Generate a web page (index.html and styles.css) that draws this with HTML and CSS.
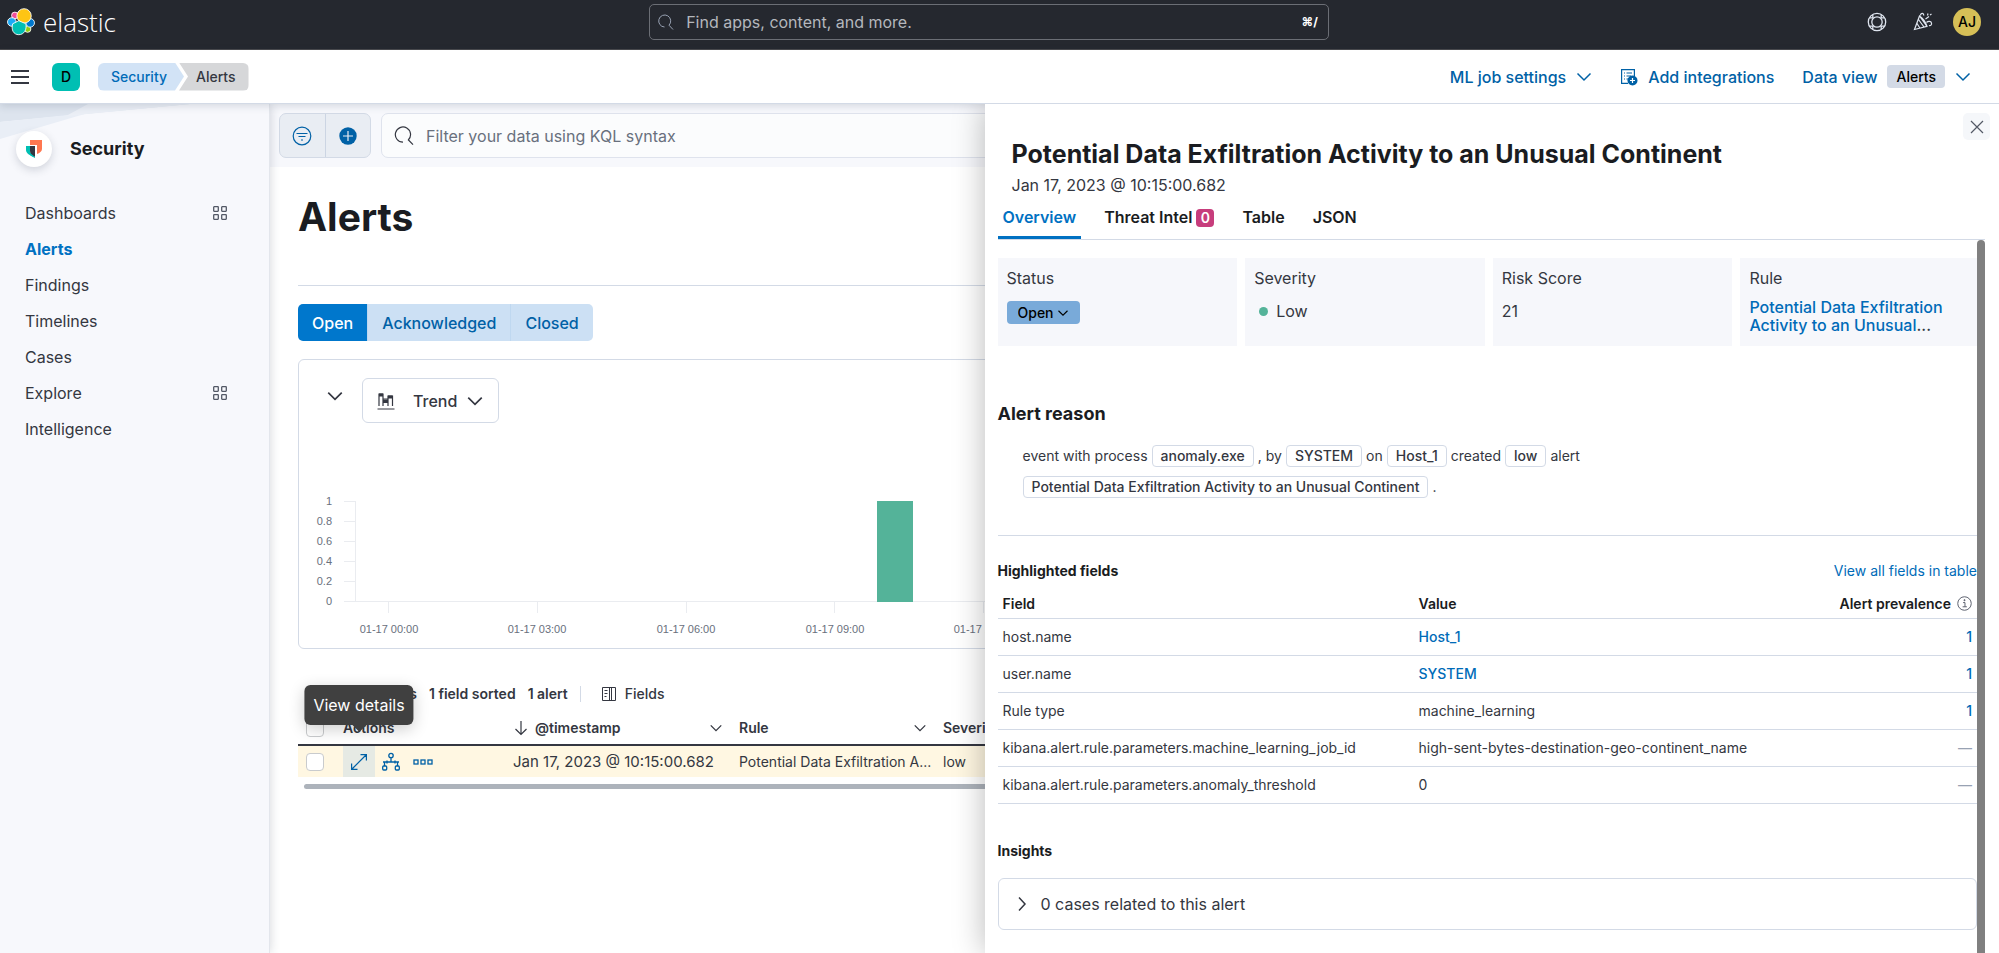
FILE: index.html
```html
<!DOCTYPE html>
<html lang="en">
<head>
  <meta charset="UTF-8">
  <title>Alerts - Elastic Security</title>
  <link rel="stylesheet" href="styles.css">
</head>
<body>
  <header class="topbar">
    <a class="brand" href="#">
      <svg class="brand-logo" width="28" height="28" viewBox="0 0 32 32" stroke="#fff" stroke-width="1">
        <circle cx="9" cy="8.500" r="3.800" fill="#f04e98"/>
        <circle cx="5.500" cy="16" r="4.900" fill="#1ba9f5"/>
        <circle cx="23.500" cy="24" r="3.800" fill="#93c90e"/>
        <circle cx="26.500" cy="17" r="4.900" fill="#0077cc"/>
        <circle cx="19.500" cy="9" r="8.200" fill="#fec514"/>
        <path d="M6.500 18l7-3.500 8 3.500c1.500 6.500-2 12.500-8 12.500S4.500 25 6.500 18z" fill="#00bfb3"/>
      </svg>
      <span class="brand-name">elastic</span>
    </a>
    <label class="global-search">
      <svg width="16" height="16" viewBox="0 0 16 16" fill="none" stroke="#98a2b3"><path d="M6.500 13A6 6 0 1 1 11 11.200L15 15.500"/></svg>
      <input type="text" placeholder="Find apps, content, and more." aria-label="Find apps, content, and more">
      <kbd>⌘/</kbd>
    </label>
    <div class="topbar-actions">
      <button class="icon-button" aria-label="Help">
        <svg width="20" height="20" viewBox="0 0 20 20" fill="none" stroke="#dfe5ef" stroke-width="1.300">
          <circle cx="10" cy="10" r="8.700"/><circle cx="10" cy="10" r="5.200"/>
          <path d="M5.800 2.600v4M2.600 5.800h4M14.200 2.600v4M17.400 5.800h-4M5.800 17.400v-4M2.600 14.200h4M14.200 17.400v-4M17.400 14.200h-4"/>
        </svg>
      </button>
      <button class="icon-button" aria-label="What's new">
        <svg width="20" height="20" viewBox="0 0 20 20" fill="none" stroke="#dfe5ef" stroke-width="1.200">
          <path d="M6.500 4L1.500 17.500l12.500-3.200zM6.500 4c3 2 6 6 7.500 10.300M5.500 7.500l5.500 7.500M4 11.500l3 4.800"/>
          <path d="M7.500 3.500c0-1.500 1-2.500 2.500-2l1 2M12.500 7l3.500-2.500M15 1.500l-.500 2M18.500 2l-1.500 1M13.500 10.500c1.500-1.500 4.500-1.500 5 .500.500 1.800-1 3-2.500 2.500"/>
        </svg>
      </button>
      <button class="avatar" aria-label="Account menu">AJ</button>
    </div>
  </header>

  <div class="subbar">
    <button class="icon-button menu-button" aria-label="Toggle navigation">
      <svg width="20" height="16" viewBox="0 0 20 16" fill="none" stroke="#343741" stroke-width="2"><path d="M1 2h18M1 8h18M1 14h18"/></svg>
    </button>
    <button class="space" aria-label="Default space">D</button>
    <nav class="breadcrumbs" aria-label="Breadcrumbs">
      <a class="crumb crumb-first" href="#">Security</a>
      <span class="crumb crumb-last">Alerts</span>
    </nav>
    <div class="subbar-actions">
      <button class="link-button">ML job settings
        <svg class="chevron" width="16" height="16" viewBox="0 0 16 16"><path d="M1.500 4.500L8 11l6.500-6.500"/></svg>
      </button>
      <a class="link-button" href="#">
        <svg width="18" height="18" viewBox="0 0 18 18" fill="none" stroke="#0061a6" stroke-width="1.200">
          <path d="M8 15.400H1.600V1.600h12.800V8M4 5h1M6.500 5H12M4 8h1M6.500 8H11M4 11h1M6.500 11H9"/>
          <circle cx="12.500" cy="12.500" r="5" fill="#0061a6" stroke="none"/>
          <path d="M12.500 10v5M10 12.500h5" stroke="#fff"/>
        </svg>
        Add integrations</a>
      <button class="link-button">Data view
        <span class="view-badge">Alerts</span>
        <svg class="chevron" width="16" height="16" viewBox="0 0 16 16"><path d="M1.500 4.500L8 11l6.500-6.500"/></svg>
      </button>
    </div>
  </div>

  <div class="app">
    <aside class="sidenav">
      <svg class="sidenav-art" width="190" height="36" viewBox="0 0 190 36">
        <path d="M0 0h190L0 18z" fill="#dde4ee"/>
        <path d="M0 18L88 9 0 35z" fill="#e9eef6"/>
        <path d="M88 0h102L66 12z" fill="#ebeff6"/>
      </svg>
      <div class="solution">
        <span class="solution-logo">
          <svg width="18" height="20" viewBox="0 0 18 20">
            <path d="M5 1h12v9c0 2.500-2.500 4-5 5V6H5z" fill="#ff7750"/>
            <path d="M1 7h4v6l4 5C4 16 1 14 1 11z" fill="#00bfb3"/>
            <path d="M5 7h5v11c-3-1-5-3-5-6z" fill="#343741"/>
            <path d="M5 14l5 4v1c-2-1-4-2-5-3z" fill="#00bfb3"/>
          </svg>
        </span>
        <h2>Security</h2>
      </div>
      <nav class="nav-list" aria-label="Security">
        <a href="#">Dashboards
          <svg width="14" height="14" viewBox="0 0 14 14" fill="none" stroke="#535966" stroke-width="1.300"><rect x=".7" y=".7" width="4.600" height="4.600" rx=".5"/><rect x="8.700" y=".7" width="4.600" height="4.600" rx=".5"/><rect x=".7" y="8.700" width="4.600" height="4.600" rx=".5"/><rect x="8.700" y="8.700" width="4.600" height="4.600" rx=".5"/></svg>
        </a>
        <a class="active" href="#">Alerts</a>
        <a href="#">Findings</a>
        <a href="#">Timelines</a>
        <a href="#">Cases</a>
        <a href="#">Explore
          <svg width="14" height="14" viewBox="0 0 14 14" fill="none" stroke="#535966" stroke-width="1.300"><rect x=".7" y=".7" width="4.600" height="4.600" rx=".5"/><rect x="8.700" y=".7" width="4.600" height="4.600" rx=".5"/><rect x=".7" y="8.700" width="4.600" height="4.600" rx=".5"/><rect x="8.700" y="8.700" width="4.600" height="4.600" rx=".5"/></svg>
        </a>
        <a href="#">Intelligence</a>
      </nav>
    </aside>

    <main class="main">
      <div class="query-bar">
        <div class="filter-buttons">
          <button aria-label="Saved queries">
            <svg width="20" height="20" viewBox="0 0 20 20" fill="none" stroke="#0061a6" stroke-width="1.200"><circle cx="10" cy="10" r="8.800"/><path d="M4.500 7.500h11M6.500 10.500h7M9 14h2"/></svg>
          </button>
          <button aria-label="Add filter">
            <svg width="20" height="20" viewBox="0 0 20 20"><circle cx="10" cy="10" r="8.700" fill="#0061a6"/><path d="M10 5v10M5 10h10" stroke="#e9edf3" stroke-width="1.200"/></svg>
          </button>
        </div>
        <label class="kql">
          <svg width="20" height="20" viewBox="0 0 20 20" fill="none" stroke="#343741" stroke-width="1.200"><path d="M9 16.200A7.600 7.600 0 1 1 14.300 14M14 13.500l5 5.200"/></svg>
          <input type="text" placeholder="Filter your data using KQL syntax" aria-label="Filter your data using KQL syntax">
        </label>
      </div>

      <div class="content">
        <h1>Alerts</h1>
        <div class="status-group">
          <button class="selected">Open</button>
          <button>Acknowledged</button>
          <button>Closed</button>
        </div>

        <section class="chart-panel">
          <div class="chart-head">
            <button class="icon-button collapse" aria-label="Collapse charts">
              <svg class="chevron dark" width="18" height="18" viewBox="0 0 16 16"><path d="M2 5l6 6 6-6"/></svg>
            </button>
            <label class="chart-type">
              <svg width="18" height="18" viewBox="0 0 18 18" fill="none" stroke="#343741" stroke-width="1.200"><path d="M.5 17h17M2 14V2h4v12M6 7h5v7M11 7V4h4.500v10M6 10.500h5"/><path d="M2 3h4M11 5h4.500M6 9h5" stroke-width="3"/></svg>
              <select aria-label="Chart type">
                <option>Trend</option>
                <option>Table</option>
              </select>
              <svg class="chevron dark" width="18" height="18" viewBox="0 0 16 16"><path d="M2 5l6 6 6-6"/></svg>
            </label>
          </div>
          <svg class="chart" height="200" role="img" aria-label="Alerts over time">
            <g stroke="#eaecf0" stroke-width="1" shape-rendering="crispEdges">
              <path d="M56.500 53v101M45 53.500h11M45 73.500h11M45 93.500h11M45 113.500h11M45 133.500h11M45 153.500h1600"/>
              <path d="M89.500 154v11M238.500 154v11M387.500 154v11M535.500 154v11M684.500 154v11"/>
            </g>
            <g class="axis" text-anchor="end">
              <text x="33" y="57">1</text>
              <text x="33" y="77">0.8</text>
              <text x="33" y="97">0.6</text>
              <text x="33" y="117">0.4</text>
              <text x="33" y="137">0.2</text>
              <text x="33" y="157">0</text>
            </g>
            <g class="axis" text-anchor="middle">
              <text x="90" y="185">01-17 00:00</text>
              <text x="238" y="185">01-17 03:00</text>
              <text x="387" y="185">01-17 06:00</text>
              <text x="536" y="185">01-17 09:00</text>
              <text x="684" y="185">01-17 12:00</text>
            </g>
            <rect x="578" y="53" width="36" height="101" fill="#54b399"/>
          </svg>
        </section>

        <div class="grid-toolbar">
          <button class="strong">Columns</button>
          <button class="strong">1 field sorted</button>
          <span class="strong">1 alert</span>
          <button class="fields">
            <svg width="16" height="16" viewBox="0 0 16 16" fill="none" stroke="#343741"><path d="M1.500 1.500h13v13h-13zM8.500 1.500v13M10.500 1.500v13M3.500 4.500h3M3.500 7.500h3M3.500 10.500h2"/></svg>
            Fields
          </button>
        </div>

        <table class="alerts">
          <colgroup><col class="col-check"><col class="col-actions"><col class="col-time"><col class="col-rule"><col></colgroup>
          <thead>
            <tr>
              <th><input type="checkbox" aria-label="Select all"></th>
              <th>Actions</th>
              <th>
                <div class="head-cell">
                  <svg width="16" height="16" viewBox="0 0 16 16" fill="none" stroke="#343741" stroke-width="1.200"><path d="M8 1v13.500M2.500 9L8 14.500 13.500 9"/></svg>
                  @timestamp
                  <svg class="chevron dark push" width="14" height="14" viewBox="0 0 16 16"><path d="M2 5l6 6 6-6"/></svg>
                </div>
              </th>
              <th>
                <div class="head-cell">
                  Rule
                  <svg class="chevron dark push" width="14" height="14" viewBox="0 0 16 16"><path d="M2 5l6 6 6-6"/></svg>
                </div>
              </th>
              <th>Severity</th>
            </tr>
          </thead>
          <tbody>
            <tr>
              <td><input type="checkbox" aria-label="Select alert"></td>
              <td>
                <div class="row-actions">
                  <button class="expand" aria-label="View details">
                    <svg width="18" height="18" viewBox="0 0 18 18" fill="none" stroke="#0061a6" stroke-width="1.200"><path d="M2 16L16 2M10.500 1.600h5.900v5.900M1.600 10.500v5.900h5.900"/></svg>
                    <span class="tooltip" role="tooltip">View details</span>
                  </button>
                  <button aria-label="Analyze event">
                    <svg width="20" height="20" viewBox="0 0 20 20" fill="none" stroke="#0061a6" stroke-width="1.300"><circle cx="10" cy="3.500" r="2.200"/><path d="M10 6v4M2 10h16M3.500 10v4M16.500 10v4M6 8.500v3M14 8.500v3"/><rect x="1.700" y="14" width="4" height="4" rx="1"/><rect x="14.300" y="14" width="4" height="4" rx="1"/></svg>
                  </button>
                  <button aria-label="More actions">
                    <svg width="20" height="8" viewBox="0 0 20 8" fill="none" stroke="#0061a6" stroke-width="1.300"><rect x="1" y="2" width="4" height="4"/><rect x="8" y="2" width="4" height="4"/><rect x="15" y="2" width="4" height="4"/></svg>
                  </button>
                </div>
              </td>
              <td class="time">Jan 17, 2023 @ 10:15:00.682</td>
              <td>Potential Data Exfiltration A...</td>
              <td>low</td>
            </tr>
          </tbody>
        </table>
        <div class="grid-scroll"></div>
      </div>
    </main>

    <section class="flyout" aria-label="Alert details">
      <button class="flyout-close" aria-label="Close">
        <svg width="14" height="14" viewBox="0 0 14 14" fill="none" stroke="#535966" stroke-width="1.200"><path d="M1 1l12 12M13 1L1 13"/></svg>
      </button>
      <header class="flyout-head">
        <h2>Potential Data Exfiltration Activity to an Unusual Continent</h2>
        <p>Jan 17, 2023 @ 10:15:00.682</p>
      </header>
      <div class="tabs" role="tablist">
        <button class="tab active" role="tab" aria-selected="true">Overview</button>
        <button class="tab" role="tab">Threat Intel <span class="count">0</span></button>
        <button class="tab" role="tab">Table</button>
        <button class="tab" role="tab">JSON</button>
      </div>
      <div class="flyout-body">
        <div class="flyout-content">
          <div class="cards">
            <div class="card">
              <h3>Status</h3>
              <label class="status-select">
                <select aria-label="Alert status"><option>Open</option></select>
                <svg class="chevron black" width="12" height="12" viewBox="0 0 16 16"><path d="M2 5l6 6 6-6"/></svg>
              </label>
            </div>
            <div class="card">
              <h3>Severity</h3>
              <p class="severity"><span class="dot"></span>Low</p>
            </div>
            <div class="card">
              <h3>Risk Score</h3>
              <p>21</p>
            </div>
            <div class="card">
              <h3>Rule</h3>
              <p class="rule-name"><a href="#">Potential Data Exfiltration<br>Activity to an Unusual</a>...</p>
            </div>
          </div>

          <h3 class="reason-title">Alert reason</h3>
          <div class="reason">
            <div class="reason-line">
              <span>event with process</span>
              <span class="chip">anomaly.exe</span>
              <span>, by</span>
              <span class="chip">SYSTEM</span>
              <span>on</span>
              <span class="chip">Host_1</span>
              <span>created</span>
              <span class="chip">low</span>
              <span>alert</span>
            </div>
            <div class="reason-line">
              <span class="chip">Potential Data Exfiltration Activity to an Unusual Continent</span>
              <span>.</span>
            </div>
          </div>

          <div class="section-head">
            <h4>Highlighted fields</h4>
            <a href="#">View all fields in table</a>
          </div>
          <table class="fields-table">
            <colgroup><col class="col-field"><col><col class="col-prevalence"></colgroup>
            <thead>
              <tr>
                <th>Field</th>
                <th>Value</th>
                <th>
                  <span class="prevalence">Alert prevalence
                    <svg width="15" height="15" viewBox="0 0 16 16" fill="none" stroke="#535966"><circle cx="8" cy="8" r="7.200"/><path d="M6.500 7h2v4.500M6 11.500h4.500M7.500 4h1v1h-1z"/></svg>
                  </span>
                </th>
              </tr>
            </thead>
            <tbody>
              <tr><td>host.name</td><td><a href="#">Host_1</a></td><td><a href="#">1</a></td></tr>
              <tr><td>user.name</td><td><a href="#">SYSTEM</a></td><td><a href="#">1</a></td></tr>
              <tr><td>Rule type</td><td>machine_learning</td><td><a href="#">1</a></td></tr>
              <tr><td>kibana.alert.rule.parameters.machine_learning_job_id</td><td>high-sent-bytes-destination-geo-continent_name</td><td class="none">—</td></tr>
              <tr><td>kibana.alert.rule.parameters.anomaly_threshold</td><td>0</td><td class="none">—</td></tr>
            </tbody>
          </table>

          <h4 class="insights-title">Insights</h4>
          <button class="insight">
            <svg class="chevron dark" width="16" height="16" viewBox="0 0 16 16"><path d="M5 1.500L11 8l-6 6.500"/></svg>
            0 cases related to this alert
          </button>
        </div>
        <div class="flyout-scroll"></div>
      </div>
    </section>
  </div>
</body>
</html>
```

FILE: styles.css
```css
* {
  box-sizing: border-box;
}

body {
  display: flex;
  flex-direction: column;
  height: 100vh;
  margin: 0;
  font-family: Inter, "Liberation Sans", sans-serif;
  font-size: 16px;
  line-height: 20px;
  color: #343741;
  background: #fff;
  overflow: hidden;
}

h1, h2, h3, h4, p {
  margin: 0;
}

a {
  color: #006bb8;
  text-decoration: none;
}

button, input, select {
  margin: 0;
  padding: 0;
  border: none;
  background: none;
  font: inherit;
  color: inherit;
}

input, select {
  outline: none;
  appearance: none;
}

button {
  cursor: pointer;
}

svg {
  display: block;
  flex: none;
}

.icon-button {
  display: flex;
  align-items: center;
  justify-content: center;
}

.chevron {
  fill: none;
  stroke: #0061a6;
  stroke-width: 1.500;
}

.chevron.dark {
  stroke: #343741;
}

.chevron.black {
  stroke: #000;
}

/* Top bar */
.topbar {
  display: flex;
  justify-content: space-between;
  align-items: flex-start;
  height: 50px;
  padding: 4px 18px 0 7px;
  background: #25282f;
  border-bottom: 1px solid #4a4a4d;
  flex: none;
}

.brand {
  display: flex;
  align-items: center;
  gap: 8px;
  height: 36px;
  flex: 1;
  color: #fff;
}

.brand-name {
  font-family: "Open Sans", sans-serif;
  font-size: 26px;
  font-weight: 300;
}

.global-search {
  display: flex;
  align-items: center;
  gap: 12px;
  width: 34vw;
  height: 36px;
  margin-right: 10px;
  padding: 0 10px 0 8px;
  border: 1px solid #6b6e75;
  border-radius: 5px;
}

.global-search input {
  flex: 1;
  min-width: 0;
}

.global-search input::placeholder {
  color: #b4b7bd;
  opacity: 1;
}

.global-search kbd {
  font-family: inherit;
  font-size: 12px;
  font-weight: 700;
  color: #fff;
}

.topbar-actions {
  display: flex;
  flex: 1;
  align-items: center;
  justify-content: flex-end;
  height: 36px;
  gap: 26px;
}

.avatar {
  width: 28px;
  height: 28px;
  margin-left: -6px;
  border-radius: 50%;
  background: #d6bf57;
  font-size: 14px;
  font-weight: 500;
  color: #000;
}

/* Breadcrumb bar */
.subbar {
  display: flex;
  align-items: center;
  height: 54px;
  padding: 0 28px 0 10px;
  border-bottom: 1px solid #d3dae6;
  box-shadow: 0 2px 8px rgba(40, 50, 70, 0.16);
  background: #fff;
  flex: none;
  position: relative;
  z-index: 2;
}

.menu-button {
  width: 20px;
}

.space {
  width: 28px;
  height: 28px;
  margin: 0 18px 0 22px;
  border-radius: 6px;
  background: #00bfb3;
  font-size: 14px;
  font-weight: 500;
  color: #000;
}

.breadcrumbs {
  display: flex;
  font-size: 14px;
  font-weight: 500;
}

.crumb {
  height: 28px;
  line-height: 28px;
}

.crumb-first {
  padding: 0 17px 0 13px;
  border-radius: 6px 0 0 6px;
  background: #d2e3f6;
  clip-path: polygon(0 0, calc(100% - 9px) 0, 100% 50%, calc(100% - 9px) 100%, 0 100%);
}

.crumb-last {
  margin-left: -5px;
  padding: 0 13px 0 17px;
  border-radius: 0 6px 6px 0;
  background: #d6d7d9;
  clip-path: polygon(0 0, 100% 0, 100% 100%, 0 100%, 9px 50%);
}

.subbar-actions {
  display: flex;
  gap: 28px;
  margin-left: auto;
}

.link-button {
  display: flex;
  align-items: center;
  gap: 10px;
  font-weight: 500;
  color: #0061a6;
}

.view-badge {
  padding: 0 9px;
  border-radius: 4px;
  background: #d3dae6;
  font-size: 14px;
  line-height: 23px;
  color: #000;
}

/* Page layout */
.app {
  display: flex;
  flex: 1;
  min-height: 0;
  position: relative;
}

.sidenav {
  width: 270px;
  flex: none;
  padding: 27px 16px 0;
  background: #f7f8fc;
  border-right: 1px solid #e3e6ec;
  box-shadow: 0 0 10px rgba(40, 50, 70, 0.2);
  position: relative;
  z-index: 1;
}

.sidenav-art {
  position: absolute;
  top: 0;
  left: 0;
}

.solution {
  display: flex;
  align-items: center;
  gap: 18px;
  margin-bottom: 28px;
  position: relative;
}

.solution-logo {
  display: flex;
  align-items: center;
  justify-content: center;
  width: 36px;
  height: 36px;
  border-radius: 50%;
  background: #fff;
  box-shadow: 0 3px 8px rgba(40, 50, 70, 0.18);
}

.solution h2 {
  font-size: 18px;
  font-weight: 700;
  color: #1a1c21;
}

.nav-list a {
  display: flex;
  align-items: center;
  justify-content: space-between;
  height: 36px;
  padding: 0 26px 0 9px;
  color: #343741;
}

.nav-list .active {
  font-weight: 700;
  color: #0071c2;
}

.main {
  flex: 1;
  min-width: 0;
  overflow: hidden;
}

.query-bar {
  display: flex;
  gap: 10px;
  padding: 9px;
  background: #f7f8fc;
}

.filter-buttons {
  display: flex;
  width: 92px;
  height: 45px;
  border: 1px solid #d3dae6;
  border-radius: 7px;
  background: #e9edf3;
}

.filter-buttons button {
  display: flex;
  flex: 1;
  align-items: center;
  justify-content: center;
}

.filter-buttons button + button {
  border-left: 1px solid #ccd5e3;
}

.kql {
  display: flex;
  flex: 1;
  align-items: center;
  gap: 12px;
  padding: 0 12px;
  border: 1px solid #dfe3ed;
  border-radius: 7px;
  background: #fbfcfd;
}

.kql input {
  flex: 1;
}

.kql input::placeholder {
  color: #69707d;
  opacity: 1;
}

.content {
  padding: 30px 28px 0;
}

h1 {
  padding-bottom: 48px;
  border-bottom: 1px solid #d3dae6;
  font-size: 39px;
  font-weight: 700;
  line-height: 40px;
  color: #1a1c21;
}

.status-group {
  display: flex;
  margin: 18px 0;
}

.status-group button {
  height: 37px;
  padding: 0 14px;
  background: #cce0f4;
  font-weight: 500;
  color: #0061a6;
}

.status-group button + button {
  border-left: 1px solid #bfd8f0;
}

.status-group button:first-child {
  border-radius: 5px 0 0 5px;
}

.status-group button:last-child {
  border-radius: 0 5px 5px 0;
}

.status-group .selected {
  background: #0077cc;
  color: #fff;
}

/* Trend chart */
.chart-panel {
  border: 1px solid #d3dae6;
  border-radius: 6px;
}

.chart-head {
  display: flex;
  gap: 17px;
  padding: 18px 26px 0;
}

.collapse {
  width: 20px;
  height: 36px;
}

.chart-type {
  display: flex;
  align-items: center;
  height: 45px;
  padding: 0 14px;
  border: 1px solid #d3dae6;
  border-radius: 6px;
  font-weight: 500;
}

.chart-type select {
  width: 53px;
  margin-left: 18px;
}

.chart {
  width: 100%;
  margin-top: 25px;
}

.axis {
  font-family: "Liberation Sans", Arial, sans-serif;
  font-size: 11px;
  fill: #69707d;
}

/* Alerts grid */
.grid-toolbar {
  display: flex;
  align-items: center;
  gap: 12px;
  height: 28px;
  margin: 31px 0 4px;
  padding-left: 59px;
  font-size: 14px;
}

.strong {
  font-weight: 600;
}

.fields {
  display: flex;
  align-items: center;
  gap: 8px;
  height: 16px;
  padding-left: 20px;
  border-left: 1px solid #d3dae6;
  font-weight: 500;
}

.alerts {
  width: 100%;
  table-layout: fixed;
  border-collapse: separate;
  border-spacing: 0;
}

.col-check {
  width: 37px;
}

.col-actions {
  width: 170px;
}

.col-time {
  width: 226px;
}

.col-rule {
  width: 204px;
}

.alerts th,
.alerts td {
  padding: 0 8px;
  text-align: left;
  white-space: nowrap;
}

.alerts th {
  height: 34px;
  border-bottom: 2px solid #343741;
  font-size: 14px;
  font-weight: 600;
}

.alerts td {
  height: 31px;
  background: #fff7e2;
  font-size: 14px;
}

.alerts .time {
  font-size: 15px;
}

.head-cell {
  display: flex;
  align-items: center;
  gap: 6px;
}

.push {
  margin-left: auto;
}

.alerts input {
  display: block;
  width: 18px;
  height: 18px;
  border: 1px solid #c9cbcd;
  border-radius: 4px;
  background: #fff;
}

.row-actions {
  display: flex;
  height: 31px;
}

.row-actions button {
  display: flex;
  align-items: center;
  justify-content: center;
  width: 32px;
}

.row-actions .expand {
  background: #e6eae4;
  position: relative;
}

.tooltip {
  position: absolute;
  bottom: calc(100% + 21px);
  left: 50%;
  transform: translateX(-50%);
  padding: 10px 9px;
  border-radius: 6px;
  background: #404040;
  box-shadow: 0 4px 16px rgba(0, 0, 0, 0.2);
  font-size: 16px;
  white-space: nowrap;
  color: #fff;
  z-index: 1;
}

.tooltip::after {
  content: "";
  position: absolute;
  top: 100%;
  left: 50%;
  border: 7px solid transparent;
  border-top-color: #404040;
  transform: translateX(-50%);
}

.grid-scroll {
  height: 5px;
  margin: 7px 0 0 6px;
  border-radius: 3px;
  background: #adb3bb;
}

/* Alert details flyout */
.flyout {
  display: flex;
  flex-direction: column;
  position: absolute;
  top: 0;
  right: 0;
  bottom: 0;
  width: calc(50% + 15px);
  background: #fff;
  box-shadow: 0 0 30px rgba(0, 0, 0, 0.28);
  /* keep the shadow off the bars above */
  clip-path: inset(0 0 0 -40px);
  z-index: 3;
}

.flyout-close {
  display: flex;
  align-items: center;
  justify-content: center;
  position: absolute;
  top: 9px;
  right: 9px;
  width: 27px;
  height: 27px;
  border-radius: 5px;
  background: #f5f7fa;
}

.flyout-head {
  padding: 34px 27px 0;
}

.flyout-head h2 {
  font-size: 25px;
  font-weight: 700;
  line-height: 32px;
  color: #1a1c21;
}

.flyout-head p {
  margin-top: 5px;
}

.tabs {
  display: flex;
  gap: 18px;
  margin: 0 14px 0 13px;
  border-bottom: 1px solid #d3dae6;
}

.tab {
  height: 44px;
  padding: 0 5px;
  font-weight: 600;
  color: #1a1c21;
}

.tab.active {
  box-shadow: inset 0 -3px #0071c2;
  color: #0071c2;
}

.count {
  display: inline-block;
  width: 18px;
  border-radius: 4px;
  background: #c73d7c;
  font-size: 14px;
  line-height: 18px;
  color: #fff;
}

.flyout-body {
  display: flex;
  flex: 1;
  min-height: 0;
  padding: 0 14px 0 13px;
}

.flyout-content {
  flex: 1;
  min-width: 0;
  padding-top: 18px;
}

.flyout-scroll {
  width: 8px;
  border-radius: 4px 4px 0 0;
  background: #808080;
  position: relative;
}

.cards {
  display: grid;
  grid-template-columns: repeat(4, 1fr);
  gap: 8px;
  margin-right: -3px;
}

.card {
  height: 88px;
  padding: 10px 9px;
  background: #f6f7fb;
}

.card h3 {
  margin-bottom: 13px;
  font-size: 16px;
  font-weight: 400;
}

.status-select {
  display: flex;
  align-items: center;
  width: fit-content;
  height: 23px;
  padding: 0 11px;
  border-radius: 4px;
  background: #79aad9;
  font-size: 14px;
  font-weight: 500;
  color: #000;
}

.status-select select {
  width: 39px;
}

.severity {
  display: flex;
  align-items: center;
  gap: 8px;
  padding-left: 5px;
}

.dot {
  width: 9px;
  height: 9px;
  border-radius: 50%;
  background: #54b399;
}

.card .rule-name {
  margin-top: -3px;
  font-weight: 500;
  line-height: 18px;
}

.reason-title {
  margin: 58px 0 21px;
  font-size: 18px;
  font-weight: 700;
  color: #1a1c21;
}

.reason {
  display: flex;
  flex-direction: column;
  gap: 9px;
  padding: 0 0 37px 25px;
  border-bottom: 1px solid #d3dae6;
  font-size: 14px;
}

.reason-line {
  display: flex;
  gap: 4px;
  line-height: 22px;
}

.chip {
  padding: 0 8px;
  border: 1px solid #d3dae6;
  border-radius: 4px;
  line-height: 20px;
  font-weight: 500;
}

.section-head {
  display: flex;
  justify-content: space-between;
  margin: 25px 0 12px;
  font-size: 14px;
}

h4 {
  font-size: 14px;
  font-weight: 700;
  color: #1a1c21;
}

.fields-table {
  width: 100%;
  table-layout: fixed;
  border-collapse: separate;
  border-spacing: 0;
  font-size: 14px;
}

.col-field {
  width: 416px;
}

.col-prevalence {
  width: 160px;
}

.fields-table th,
.fields-table td {
  height: 37px;
  padding: 0 5px;
  border-bottom: 1px solid #d3dae6;
  text-align: left;
}

.fields-table th {
  height: 26px;
  padding-bottom: 4px;
  font-weight: 600;
  color: #1a1c21;
}

.fields-table td a {
  font-weight: 500;
}

.fields-table th:last-child,
.fields-table td:last-child {
  text-align: right;
}

.fields-table .none {
  color: #98a2b3;
}

.prevalence {
  display: flex;
  align-items: center;
  justify-content: flex-end;
  gap: 6px;
}

.insights-title {
  margin: 37px 0 17px;
}

.insight {
  display: flex;
  align-items: center;
  gap: 11px;
  width: 100%;
  height: 52px;
  padding: 0 15px;
  border: 1px solid #d3dae6;
  border-radius: 6px;
}
```
